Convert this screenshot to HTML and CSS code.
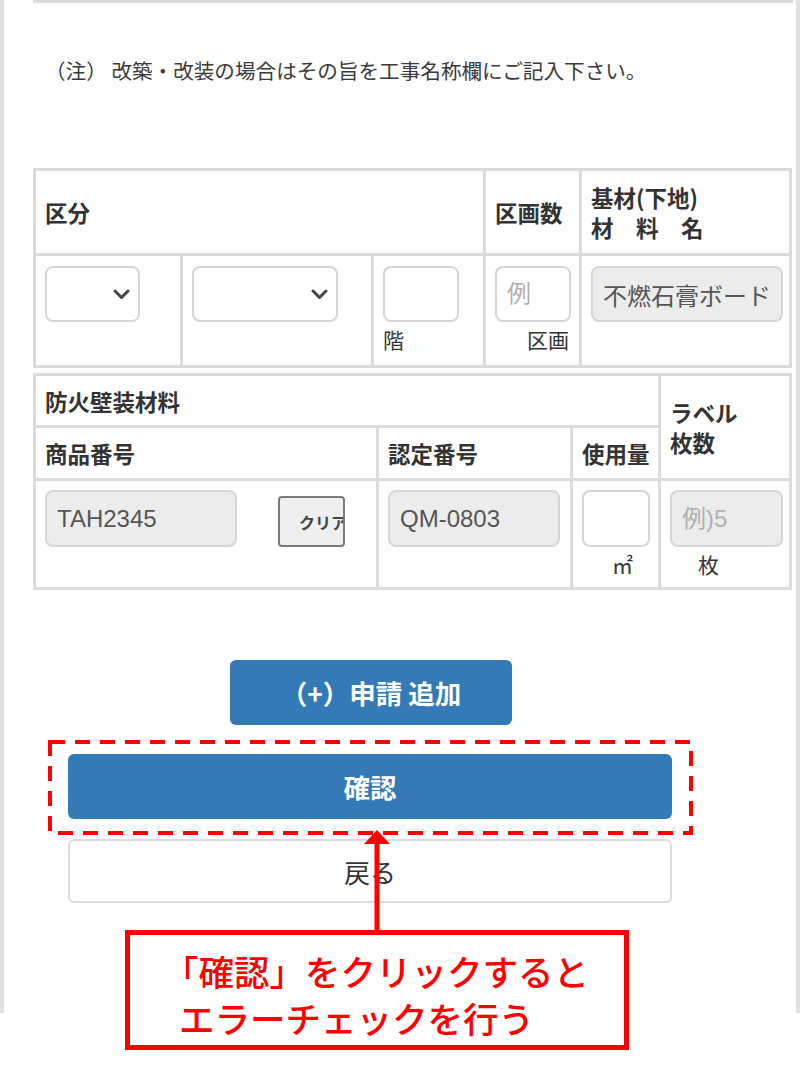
FILE: index.html
```html
<!DOCTYPE html>
<html lang="ja">
<head>
    <meta charset="UTF-8">
    <meta name="viewport" content="width=device-width, initial-scale=1.0">
    <title>防火壁装材料 申請</title>
    <link rel="stylesheet" href="styles.css">
</head>
<body>
    <div class="page">
        <div class="screen">
            <div class="prev-border"></div>

            <!-- Note -->
            <p class="note">（注） 改築・改装の場合はその旨を工事名称欄にご記入下さい。</p>

            <!-- Section 1: 区分 -->
            <table class="grid grid-kubun">
                <colgroup>
                    <col class="k-col1">
                    <col class="k-col2">
                    <col class="k-col3">
                    <col class="k-col4">
                    <col class="k-col5">
                </colgroup>
                <tr class="row-head">
                    <th colspan="3">区分</th>
                    <th>区画数</th>
                    <th class="th-two">基材(下地)<br>材　料　名</th>
                </tr>
                <tr class="row-data">
                    <td>
                        <div class="select select-sm">
                            <svg width="17" height="11" viewBox="0 0 17 11"><path d="M2 2 L8.5 8.5 L15 2" fill="none" stroke="#444" stroke-width="3" stroke-linecap="round" stroke-linejoin="round"/></svg>
                        </div>
                    </td>
                    <td>
                        <div class="select select-md">
                            <svg width="17" height="11" viewBox="0 0 17 11"><path d="M2 2 L8.5 8.5 L15 2" fill="none" stroke="#444" stroke-width="3" stroke-linecap="round" stroke-linejoin="round"/></svg>
                        </div>
                    </td>
                    <td>
                        <input type="text" class="field field-floor">
                        <div class="unit">階</div>
                    </td>
                    <td>
                        <input type="text" class="field field-floor" placeholder="例">
                        <div class="unit unit-right">区画</div>
                    </td>
                    <td>
                        <input type="text" class="field field-locked field-base" value="不燃石膏ボード" readonly>
                    </td>
                </tr>
            </table>

            <!-- Section 2: 防火壁装材料 -->
            <table class="grid grid-material">
                <colgroup>
                    <col class="m-col1">
                    <col class="m-col2">
                    <col class="m-col3">
                    <col class="m-col4">
                </colgroup>
                <tr class="row-title">
                    <th colspan="3">防火壁装材料</th>
                    <th rowspan="2" class="th-label">ラベル<br>枚数</th>
                </tr>
                <tr class="row-sub">
                    <th>商品番号</th>
                    <th>認定番号</th>
                    <th class="th-tight">使用量</th>
                </tr>
                <tr class="row-entry">
                    <td>
                        <div class="product">
                            <input type="text" class="field field-locked field-product" value="TAH2345" readonly>
                            <button type="button" class="btn-clear">クリア</button>
                        </div>
                    </td>
                    <td>
                        <input type="text" class="field field-locked field-cert" value="QM-0803" readonly>
                    </td>
                    <td>
                        <input type="text" class="field field-amount">
                        <div class="unit unit-m2">㎡</div>
                    </td>
                    <td>
                        <input type="text" class="field field-locked field-count" placeholder="例)5" readonly>
                        <div class="unit unit-sheet">枚</div>
                    </td>
                </tr>
            </table>

            <!-- Actions -->
            <button type="button" class="btn btn-add">（+）申請 追加</button>

            <div class="confirm-wrap">
                <svg class="dash-frame" width="645" height="95" viewBox="0 0 645 95">
                    <rect x="2" y="2" width="641" height="91" fill="none" stroke="#ff0000" stroke-width="4" stroke-dasharray="15 10"/>
                </svg>
                <button type="button" class="btn btn-confirm">確認</button>
            </div>

            <button type="button" class="btn-back">戻る</button>
        </div>

        <!-- Annotation -->
        <svg class="arrow" width="28" height="102" viewBox="0 0 28 102">
            <polygon points="14,0 1,14 27,14" fill="#ff0000"/>
            <rect x="11.5" y="12" width="5" height="90" fill="#ff0000"/>
        </svg>
        <div class="callout"><span class="bracket">「</span>確認」をクリックすると<br>エラーチェックを行う</div>
    </div>
</body>
</html>
```

FILE: styles.css
```css
/* General Styles */
body {
    margin: 0;
    padding: 0;
    font-family: "Liberation Sans", "Noto Sans CJK JP", sans-serif;
    color: #333;
    background-color: #fff;
}

.page {
    position: relative;
    width: 800px;
    height: 1090px;
    overflow: hidden;
}

.screen {
    height: 1013px;
    box-sizing: border-box;
    border-left: 4px solid #e0e0e0;
    border-right: 4px solid #e0e0e0;
    padding: 0 3px 0 29px;
}

.prev-border {
    height: 3px;
    background-color: #dcdcdc;
}

.note {
    margin: 52px 0 0 12px;
    font-family: "Noto Sans CJK JP", sans-serif;
    font-size: 20.6px;
    line-height: 30px;
    color: #3a3a3a;
}

/* Tables */
.grid {
    width: 759px;
    border-collapse: collapse;
    table-layout: fixed;
}

.grid th,
.grid td {
    border: 3px solid #dcdcdc;
    padding: 0 4px 0 9px;
    text-align: left;
}

.grid th {
    font-family: "Noto Sans CJK JP", sans-serif;
    font-size: 22.5px;
    font-weight: bold;
    line-height: 30px;
    vertical-align: middle;
    color: #333;
}

.grid td {
    vertical-align: top;
}

.grid-kubun {
    margin-top: 83px;
}

.k-col1 { width: 147px; }
.k-col2 { width: 191px; }
.k-col3 { width: 112px; }
.k-col4 { width: 96px; }
.k-col5 { width: 210px; }

.grid-kubun .row-head { height: 85px; }
.grid-kubun .row-data { height: 112px; }
.grid-kubun .row-data td { padding-top: 10px; }

.th-two {
    line-height: 32px;
    padding-top: 4px;
}

.grid-material {
    margin-top: 5px;
}

.m-col1 { width: 343px; }
.m-col2 { width: 194px; }
.m-col3 { width: 88px; }
.m-col4 { width: 131px; }

.grid-material .row-title { height: 52px; }
.grid-material .row-sub { height: 53px; }
.grid-material .row-entry { height: 109px; }
.grid-material .row-entry td { padding-top: 9px; }

.th-label {
    line-height: 34px;
}

.th-tight {
    padding-right: 0;
}

/* Inputs */
.field {
    display: block;
    box-sizing: border-box;
    height: 56px;
    margin: 0;
    padding: 0 10px;
    border: 2px solid #d6d6d6;
    border-radius: 8px;
    background-color: #fff;
    font-family: "Liberation Sans", "Noto Sans CJK JP", sans-serif;
    font-size: 24px;
    color: #555;
    outline: none;
}

.field::placeholder {
    color: #b0b0b0;
}

.field-locked {
    background-color: #ececec;
}

.field-floor { width: 76px; }
.field-base { width: 192px; }
.field-product { width: 192px; height: 57px; }
.field-cert { width: 172px; height: 57px; }
.field-amount { width: 68px; height: 57px; }
.field-count { width: 113px; height: 57px; }

.select {
    display: flex;
    align-items: center;
    justify-content: flex-end;
    box-sizing: border-box;
    height: 56px;
    padding-right: 8px;
    border: 2px solid #d6d6d6;
    border-radius: 8px;
    background-color: #fff;
}

.select-sm { width: 95px; }
.select-md { width: 146px; }

.unit {
    font-family: "Noto Sans CJK JP", sans-serif;
    font-size: 21px;
    line-height: 34px;
    color: #333;
}

.unit-right {
    width: 74px;
    text-align: right;
}

.unit-m2 {
    padding-left: 30px;
}

.unit-sheet {
    padding-left: 28px;
}

.product {
    display: flex;
    align-items: flex-end;
    gap: 41px;
}

.btn-clear {
    box-sizing: border-box;
    width: 67px;
    height: 51px;
    padding: 0 0 0 19px;
    border: 2px solid #7a7a7a;
    border-radius: 4px;
    background-color: #efefef;
    font-family: "Noto Sans CJK JP", sans-serif;
    font-size: 16px;
    font-weight: bold;
    color: #444;
    text-align: left;
    white-space: nowrap;
    overflow: hidden;
}

/* Buttons */
.btn {
    display: block;
    box-sizing: border-box;
    border: none;
    border-radius: 6px;
    background-color: #337ab7;
    color: #fff;
    font-family: "Noto Sans CJK JP", sans-serif;
    font-size: 26.5px;
    font-weight: bold;
    cursor: pointer;
}

.btn-add {
    width: 282px;
    height: 65px;
    margin: 70px 0 0 197px;
}

.confirm-wrap {
    position: relative;
    box-sizing: border-box;
    width: 645px;
    height: 95px;
    margin: 15px 0 0 15px;
    padding: 14px 0 0 20px;
}

.dash-frame {
    position: absolute;
    top: 0;
    left: 0;
}

.btn-confirm {
    width: 604px;
    height: 65px;
}

.btn-back {
    display: block;
    box-sizing: border-box;
    width: 604px;
    height: 64px;
    margin: 4px 0 0 35px;
    border: 2px solid #dcdcdc;
    border-radius: 6px;
    background-color: #fff;
    font-family: "Noto Sans CJK JP", sans-serif;
    font-size: 26px;
    color: #333;
    cursor: pointer;
}

/* Annotation overlay */
.arrow {
    position: absolute;
    left: 363px;
    top: 830px;
}

.callout {
    position: absolute;
    left: 125px;
    top: 930px;
    box-sizing: border-box;
    width: 504px;
    height: 120px;
    padding: 12px 0 0 49px;
    border: 5px solid #ff0000;
    background-color: #fff;
    font-family: "Noto Sans CJK JP", sans-serif;
    font-size: 35.5px;
    font-weight: 500;
    line-height: 47px;
    color: #ff0000;
    white-space: nowrap;
}

.bracket {
    margin-left: -16px;
}
```
